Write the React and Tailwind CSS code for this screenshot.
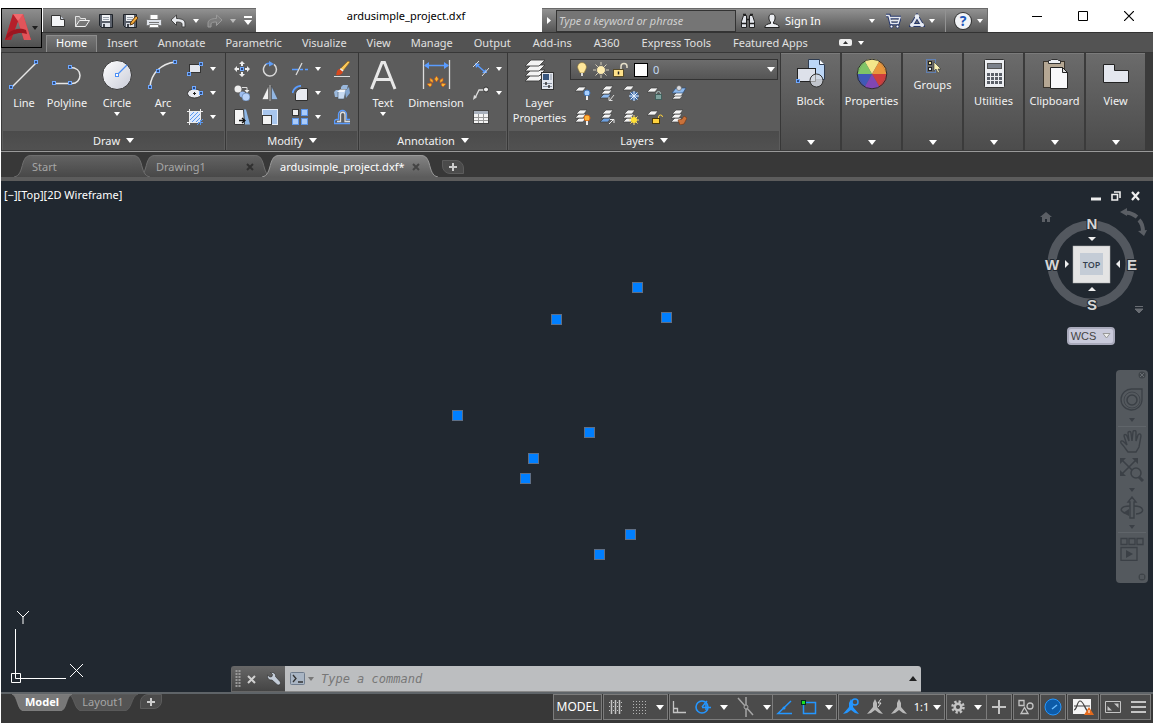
import React from 'react';

const menuTabs = [
  'Home', 'Insert', 'Annotate', 'Parametric', 'Visualize', 'View', 'Manage',
  'Output', 'Add-ins', 'A360', 'Express Tools', 'Featured Apps',
];

const points = [
  [636, 106], [555, 138], [665, 136], [456, 234], [588, 251],
  [532, 277], [524, 297], [629, 353], [598, 373],
];

const Svg = ({ w = 16, h = 16, box, children, className = '' }) => (
  <svg width={w} height={h} viewBox={box || `0 0 ${w} ${h}`} fill="none" className={`shrink-0 ${className}`} aria-hidden="true">
    {children}
  </svg>
);

const Caret = ({ big, className = 'text-white' }) => (
  <Svg w={big ? 8 : 6} h={big ? 5 : 4} className={className}>
    <path d={big ? 'M0 0h8L4 5z' : 'M0 0h6L3 4z'} fill="currentColor" />
  </Svg>
);

// small blue square used as a grip on most drawing icons
const Grip = ({ x, y }) => (
  <rect x={x - 1.5} y={y - 1.5} width="3" height="3" fill="#2d4a80" stroke="#6ea8ff" />
);

/* ---------- quick access icons ---------- */

const NewIcon = () => (
  <Svg><path d="M1.5 2.5h9l4 4v7h-13z" fill="#f4f5f7" stroke="#333" /><path d="M10.5 2.5v4h4" fill="#cdd3de" stroke="#444" /></Svg>
);
const OpenIcon = () => (
  <Svg>
    <path d="M1.5 13.5v-10h4l1 2h5v3" fill="#8b8b8b" stroke="#e4e4e4" />
    <path d="M1.5 13.5l4-6h10l-4 6z" fill="#777" stroke="#f0f0f0" />
  </Svg>
);
const SaveIcon = ({ pen }) => (
  <Svg>
    <path d="M1.5 1.5h13v13h-11l-2-2z" fill="#5a606b" stroke="#1f2329" />
    <rect x="4" y="2" width="8" height="6" fill="#f0f2f5" />
    <path d="M5 4.5h6M5 6.5h6" stroke="#9aa2ad" />
    <rect x="4" y="10" width="8" height="4" fill="#dde1e8" />
    <rect x="5" y="11" width="2" height="3" fill="#42464e" />
    {pen && <path d="M8 12l1-3 5-6 2 2-5 6z" fill="#f3a93b" stroke="#5b3a10" />}
  </Svg>
);
const PrintIcon = () => (
  <Svg>
    <path d="M4 1.5h8v5H4z" fill="#fff" stroke="#888" />
    <rect x="0.5" y="6.5" width="15" height="6" rx="1" fill="#dfe3ea" stroke="#777" />
    <path d="M3 9.5h10" stroke="#777" />
    <path d="M3.5 11.5h9v3h-9z" fill="#fff" stroke="#888" />
  </Svg>
);
const UndoIcon = ({ redo }) => (
  <Svg className={redo ? '-scale-x-100' : ''}>
    <path d="M1 7L6.500 2v3.500c5 0 8.500 1.500 8.500 4.500v4h-3v-3c0-1.500-2-2-5.500-2v3.500z" fill={redo ? '#7c7c7c' : '#e8eaee'} stroke={redo ? '#9a9a9a' : '#454545'} />
  </Svg>
);

/* ---------- draw icons ---------- */

const LineIcon = () => (
  <Svg w={32} h={32}><path d="M4 28L28 4" stroke="#e6e6e6" strokeWidth="1.4" /><Grip x={3} y={28} /><Grip x={28} y={3} /></Svg>
);
const PolylineIcon = () => (
  <Svg w={32} h={32}>
    <path d="M3 24.5h18c4.500 0 8-3.500 8-8s-3.500-8-10-8" stroke="#e6e6e6" strokeWidth="1.5" />
    <Grip x={3} y={24} /><Grip x={19} y={24} /><Grip x={19} y={8} />
  </Svg>
);
const CircleIcon = () => (
  <Svg w={32} h={32}>
    <defs><linearGradient id="disc" x1="0" y1="0" x2="1" y2="1"><stop stopColor="#fff" /><stop offset="1" stopColor="#c9ccd8" /></linearGradient></defs>
    <circle cx="16" cy="16" r="14.5" fill="url(#disc)" stroke="#383838" />
    <path d="M16 16L26 6" stroke="#4d90f5" strokeWidth="1.3" />
    <rect x="14.5" y="14.5" width="3" height="3" fill="#fff" stroke="#4d90f5" />
  </Svg>
);
const ArcIcon = () => (
  <Svg w={32} h={32}><path d="M3 28C4 14 14 5 28 3" stroke="#e6e6e6" strokeWidth="1.6" /><Grip x={3} y={28} /><Grip x={11} y={12} /><Grip x={28} y={3} /></Svg>
);
const RectIcon = () => (
  <Svg><rect x="2.5" y="3.5" width="11" height="8" fill="#e2e5ec" stroke="#333" /><Grip x={2} y={13} /><Grip x={14} y={3} /></Svg>
);
const EllipseIcon = () => (
  <Svg>
    <ellipse cx="7.5" cy="8.5" rx="7" ry="4.5" fill="#e9ebf0" stroke="#333" />
    <path d="M6 8.500h3M7.500 7v3" stroke="#222" /><Grip x={7} y={3} /><Grip x={14} y={8} />
  </Svg>
);
const HatchIcon = () => (
  <Svg>
    <rect x="3" y="3" width="10" height="10" fill="#dce8fb" />
    <path d="M3 7l4-4M3 11l8-8M5 13l8-8M9 13l4-4" stroke="#5b98ee" />
    <path d="M0 2.5h16M0 13.5h13M2.5 0v16M13.5 0v11" stroke="#ededed" />
    <path d="M10 16l6-6M13.5 11v5M11 13.5h5" stroke="#5b98ee" />
  </Svg>
);

/* ---------- modify icons ---------- */

const MoveIcon = () => (
  <Svg>
    <path d="M8 0l3 3H9v2H7V3H5zM8 16l3-3H9v-2H7v2H5zM0 8l3-3v2h2v2H3v2zM16 8l-3-3v2h-2v2h2v2z" fill="#eee" />
    <rect x="6.5" y="6.5" width="3" height="3" fill="#2d4a80" stroke="#6ea8ff" />
  </Svg>
);
const RotateIcon = () => (
  <Svg><path d="M12 3.400A6.500 6.500 0 1 1 5 2.700" stroke="#d8d8d8" strokeWidth="1.5" /><path d="M4 3.200a6.500 6.500 0 0 1 5-.8" stroke="#4d90f5" strokeWidth="1.5" /><path d="M7 0l5 3-5 2.500z" fill="#5f9df6" /></Svg>
);
const TrimIcon = () => (
  <Svg><path d="M0 8.5h6" stroke="#5a9cff" strokeWidth="1.5" /><path d="M4 14L10 2" stroke="#ddd" strokeWidth="1.3" /><path d="M8 8.5h3M13 8.5h3" stroke="#5a9cff" strokeWidth="1.5" /></Svg>
);
const EraseIcon = () => (
  <Svg>
    <path d="M6 8L14 0l2 1-7 9z" fill="#f9c85a" stroke="#8a5a12" strokeWidth="0.6" />
    <path d="M6 8l3 2" stroke="#eee" strokeWidth="2" />
    <path d="M2 14c1-1 0-5 3.500-6L9 11c-1 3-5 3.500-7 3z" fill="#d8481e" /><path d="M0 15.5h16" stroke="#ddd" />
  </Svg>
);
const CopyIcon = () => (
  <Svg>
    <circle cx="4" cy="4" r="3.5" fill="#eee" /><path d="M8 2.5h5V6" stroke="#ddd" /><path d="M10.500 5h5L13 8z" fill="#eee" />
    <circle cx="8.5" cy="9.5" r="3" fill="#9bbcf0" /><circle cx="12" cy="12" r="4" fill="#b9d2f8" stroke="#5578a8" strokeWidth="0.6" />
  </Svg>
);
const MirrorIcon = () => (
  <Svg><path d="M6.500 1v13.500H0z" fill="#f1f1f1" stroke="#444" strokeWidth="0.5" /><path d="M9.500 1v13.500H16z" fill="#93b7e3" stroke="#444" strokeWidth="0.5" /><path d="M8 0v16" stroke="#ccc" strokeWidth="0.8" /></Svg>
);
const FilletIcon = () => (
  <Svg><path d="M3.500 15.500V10C3.500 6 6 3.500 10 3.500h5.500v12z" fill="#e8ebf1" stroke="#2e2e2e" /><path d="M0.500 8C1.500 4 4.500 1.200 9 0.800" stroke="#5a9cff" strokeWidth="1.8" /></Svg>
);
const ExplodeIcon = () => (
  <Svg>
    <path d="M0 7l2-2h4l-1 7H1zM7 2l2-2h5l-1 4H7z" fill="#9ab8dc" /><path d="M4 7l3-2h5l-2 9H4z" fill="#c6daf2" stroke="#456" strokeWidth="0.6" /><path d="M11 6l4-4 1 6-4 5z" fill="#83a6d0" /><path d="M3 7l3-2.500h6L10 7z" fill="#f2f6fb" />
  </Svg>
);
const StretchIcon = () => (
  <Svg><path d="M9 .5h3l4 15h-7z" fill="#8eb7e6" /><path d="M.5.5h9l1 15H.5z" fill="#f3f3f3" stroke="#3a3a3a" /><path d="M5 11.500h5M8 9l3 2.500L8 14" stroke="#111" strokeWidth="1.3" /></Svg>
);
const ScaleIcon = () => (
  <Svg><rect x="0.5" y="0.5" width="15" height="15" fill="#a8c6ee" stroke="#e8eef8" /><rect x="0.5" y="6.5" width="9" height="9" fill="#f3f3f3" stroke="#3a3a3a" /></Svg>
);
const ArrayIcon = () => (
  <Svg>
    <rect x="0.5" y="0.5" width="6" height="6" fill="#eee" stroke="#333" />
    <rect x="9.5" y="0.5" width="6" height="6" fill="#a9cbfa" stroke="#5c95e8" />
    <rect x="0.5" y="9.5" width="6" height="6" fill="#a9cbfa" stroke="#5c95e8" />
    <rect x="9.5" y="9.5" width="6" height="6" fill="#a9cbfa" stroke="#5c95e8" />
  </Svg>
);
const OffsetIcon = () => (
  <Svg>
    <path d="M16 14.5H.5v-2c0-1.500 1-2 2-2h2V5.500a4 4 0 0 1 8 0v5H16" stroke="#5a9cff" strokeWidth="1.3" />
    <path d="M16 12.500h-5V5.500a2.200 2.200 0 0 0-4.500 0v7H3" stroke="#ddd" strokeWidth="1.3" />
  </Svg>
);

/* ---------- annotation icons ---------- */

const TextIcon = () => (
  <Svg w={32} h={32}><path d="M4.500 30L15 3.500h2.500L28 30M8 20.500h16.500" stroke="#e8e8e8" strokeWidth="3" /></Svg>
);
const DimensionIcon = () => (
  <Svg w={32} h={32}>
    <path d="M3.500 1v29M29.500 1v29" stroke="#ddd" strokeWidth="1.3" />
    <path d="M5 6.5h23" stroke="#5a9cff" strokeWidth="1.5" /><path d="M4 6.500L9 3v7zM29 6.500L24 3v7z" fill="#5a9cff" />
    <g fill="#f6b733" stroke="#c4551c" strokeWidth="0.7">
      <path d="M16.500 17l2 3-2 3-2-3zM10 19l3 2v3l-3-2zM23 19l-3 2v3l3-2zM7 25l4-1 1 2-2 2zM26 25l-4-1-1 2 2 2z" />
    </g>
  </Svg>
);
const LinearDimIcon = () => (
  <Svg><path d="M4 4l8 7" stroke="#5a9cff" strokeWidth="1.5" /><path d="M2 2l1 5 4-4zM14 12l-5 0 4-4z" fill="#5a9cff" /><path d="M0 6l6-6M9 15l7-8" stroke="#ddd" /></Svg>
);
const LeaderIcon = () => (
  <Svg><path d="M2 13L6 5h6" stroke="#ddd" strokeWidth="1.3" /><path d="M0 15l1-5 3 2z" fill="#ddd" /><circle cx="13" cy="4.5" r="2.5" fill="#eee" stroke="#333" /></Svg>
);
const TableIcon = () => (
  <Svg><rect x="0.5" y="1.5" width="15" height="13" fill="#f4f4f4" stroke="#444" /><rect x="1" y="2" width="14" height="3" fill="#a9b1bd" /><path d="M1 8.5h14M1 11.5h14M5.5 5v9M10.5 5v9" stroke="#999" /></Svg>
);

/* ---------- layer icons ---------- */

const Sheet = ({ x = 0, y, fill = '#f4f4f4' }) => (
  <path d={`M${x} ${y + 4}l4-4h7l-3 4z`} fill={fill} stroke="#3d3d3d" strokeWidth="0.7" />
);
const LayerPropsIcon = () => (
  <Svg w={32} h={32}>
    {[16, 11, 6, 1].map((y) => (
      <path key={y} d={`M1 ${y + 6}l6-6h14l-6 6z`} fill="#f4f4f4" stroke="#3d3d3d" strokeWidth="0.9" />
    ))}
    <rect x="17.5" y="13.5" width="12" height="17" fill="#e4e7ee" stroke="#333" />
    <rect x="19" y="15" width="6" height="6" fill="#39577f" /><path d="M19 24.5h9M19 27.5h9M27 15v6" stroke="#8a94a3" /><path d="M22 23v3M25 26v3" stroke="#333" strokeWidth="1.5" />
  </Svg>
);
const BulbIcon = () => (
  <Svg><path d="M8 .5a4.500 4.500 0 0 0-4 6.500l2 4h4l2-4A4.500 4.500 0 0 0 8 .5z" fill="#ffe79a" stroke="#8b7434" strokeWidth="0.6" /><path d="M6.500 11v3.500h3V11" fill="#d8d8d8" stroke="#555" /></Svg>
);
const SunIcon = () => (
  <Svg><path d="M8 0v16M0 8h16M2.500 2.500l11 11M13.500 2.500l-11 11" stroke="#d7d0bb" /><circle cx="8" cy="8" r="4.5" fill="#ffedb0" stroke="#666" /></Svg>
);
const UnlockIcon = () => (
  <Svg>
    <path d="M9 8V4.500a3 3 0 0 1 6 0V6" stroke="#e6dfc9" strokeWidth="1.5" /><rect x="1.5" y="7.5" width="10" height="7" fill="#ffe28a" stroke="#564a28" /><path d="M6.500 9.500v3" stroke="#222" strokeWidth="1.5" />
  </Svg>
);

const layerIcons = [
  <Svg key="off"><Sheet y={2} /><circle cx="12" cy="8" r="3" fill="#a8d0ff" stroke="#3f76bb" /><path d="M12 11v4" stroke="#eee" strokeWidth="2" /></Svg>,
  <Svg key="iso"><Sheet x={1} y={9} fill="#8db9ee" /><Sheet x={2} y={5} /><Sheet x={3} y={1} /><path d="M15 10l-4 5M10 12v3.500h3.500" stroke="#ddd" /></Svg>,
  <Svg key="freeze"><Sheet y={1} /><circle cx="11" cy="11" r="4.5" fill="#406ca8" /><path d="M11 6v10M6 11h10M7.500 7.500l7 7M14.500 7.500l-7 7" stroke="#e5f1ff" /></Svg>,
  <Svg key="lock"><Sheet y={3} /><path d="M9.500 10V8.500a2 2 0 0 1 4 0V10" stroke="#a8c0bd" /><rect x="8.5" y="9.5" width="6" height="5" fill="#7fa19d" stroke="#42605c" /></Svg>,
  <Svg key="match"><Sheet x={1} y={10} /><Sheet x={2} y={7} /><path d="M1 8l4-5h10l-3 5z" fill="#8db9ee" stroke="#2c4a73" strokeWidth="0.7" /><circle cx="8" cy="3" r="2.5" fill="#d9dbe0" stroke="#555" strokeWidth="0.6" /></Svg>,
  <Svg key="on"><Sheet y={9} /><Sheet y={5} /><Sheet x={1} y={1} /><circle cx="12" cy="9" r="3" fill="#ffb53a" stroke="#d9690f" /><path d="M12 12v4" stroke="#eee" strokeWidth="2" /></Svg>,
  <Svg key="uniso"><Sheet x={1} y={9} fill="#6da0e0" /><Sheet x={2} y={5} /><Sheet x={3} y={1} /><path d="M10 15l4-4M11 10.500h4V14" stroke="#eee" /></Svg>,
  <Svg key="thaw"><Sheet y={9} /><Sheet y={5} /><Sheet x={1} y={1} /><path d="M11 6v10M6 11h10M7.500 7.500l7 7M14.500 7.500l-7 7" stroke="#ffe07a" /><circle cx="11" cy="11" r="3" fill="#ffe033" /></Svg>,
  <Svg key="unlock"><Sheet y={2} /><path d="M11.500 10V8a2 2 0 0 1 4 0" stroke="#ffd23c" /><rect x="5.5" y="9.5" width="7" height="5" fill="#ffd23c" stroke="#4b3a09" /></Svg>,
  <Svg key="current"><Sheet y={9} /><Sheet y={5} /><Sheet x={1} y={1} /><path d="M7 11l4-1 2-3 3 2-3 6-4 1z" fill="#c9713a" stroke="#6b3514" strokeWidth="0.6" /></Svg>,
];

/* ---------- collapsed panel icons ---------- */

const BlockIcon = () => (
  <Svg w={32} h={32}>
    <path d="M13.500 1.500h11l5 5v15h-16z" fill="#bcd6f6" stroke="#2f3c50" /><path d="M24.500 1.500v5h5" fill="#fff" stroke="#2f3c50" />
    <rect x="2.5" y="10.5" width="18" height="13" fill="#dde1ea" stroke="#222" /><circle cx="21.5" cy="22.5" r="6.5" fill="#d4d8e0" fillOpacity=".85" stroke="#333" /><path d="M20.500 17v6.500H16" stroke="#999" /><Grip x={3} y={23} />
  </Svg>
);
const WheelIcon = () => (
  <Svg w={32} h={32}>
    <path d="M16 16L8.500 3h15z" fill="#f3e78a" /><path d="M16 16l7.500-13L31 16z" fill="#e8963c" /><path d="M16 16h15l-7.500 13z" fill="#cf3d3d" />
    <path d="M16 16l7.500 13h-15z" fill="#8146b4" /><path d="M16 16L8.500 29 1 16z" fill="#4059b8" /><path d="M16 16H1L8.500 3z" fill="#7fc566" />
    <path d="M8.500 3a15 15 0 0 1 15 0z" fill="#f3e78a" /><path d="M23.500 3A15 15 0 0 1 31 16z" fill="#e8963c" /><path d="M31 16a15 15 0 0 1-7.500 13z" fill="#cf3d3d" />
    <path d="M23.500 29a15 15 0 0 1-15 0z" fill="#8146b4" /><path d="M8.500 29A15 15 0 0 1 1 16z" fill="#4059b8" /><path d="M1 16A15 15 0 0 1 8.500 3z" fill="#7fc566" />
    <circle cx="16" cy="16" r="14.8" stroke="#2e2e2e" />
  </Svg>
);
const GroupIcon = () => (
  <Svg>
    <path d="M1.500 1.500h9v13h-9z" stroke="#5c9bff" strokeDasharray="1 1" /><rect x="3.5" y="3.5" width="3" height="3" fill="#f5e79a" stroke="#222" /><rect x="3.5" y="9.5" width="3" height="3" fill="#dfeaf5" stroke="#222" />
    <path d="M9 4v9l2-2 2 4 1.500-1-1.500-3h3z" fill="#f7efb6" stroke="#333" strokeWidth="0.6" />
  </Svg>
);
const CalculatorIcon = () => (
  <Svg w={32} h={32}>
    <rect x="6.5" y="1.5" width="20" height="28" rx="1" fill="#eceef2" stroke="#333" /><rect x="9.5" y="5.5" width="14" height="5" fill="#7c828c" stroke="#555" />
    <path d="M9 16.5h15M9 20.5h15M9 24.5h15" stroke="#5a5f68" strokeWidth="3" strokeDasharray="3 1" />
  </Svg>
);
const ClipboardIcon = () => (
  <Svg w={32} h={32}>
    <rect x="4.5" y="3.5" width="21" height="26" fill="#b5a793" stroke="#3a342b" /><path d="M9.500 2.500h2l1-1h6l1 1h2v3h-12z" fill="#eef0f4" stroke="#333" />
    <path d="M11.500 9.500h12l5 5v16h-17z" fill="#f8f8fa" stroke="#222" /><path d="M23.500 9.500v5h5z" fill="#ddd" stroke="#222" />
  </Svg>
);
const ViewIcon = () => (
  <Svg w={32} h={32}><path d="M3.500 6.500h11v6h14v12h-25z" fill="#e4e7ee" stroke="#222" /></Svg>
);

const collapsedPanels = [
  ['Block', BlockIcon], ['Properties', WheelIcon], ['Groups', GroupIcon],
  ['Utilities', CalculatorIcon], ['Clipboard', ClipboardIcon], ['View', ViewIcon],
];

/* ---------- ribbon building blocks ---------- */

const Panel = ({ title, className = '', children }) => (
  <section className={`flex flex-col border-r border-[#373737] ${className}`}>
    <div className="flex flex-1 pt-1">{children}</div>
    <button className="mx-px flex h-[19px] items-center justify-center gap-[6px] bg-linear-to-b from-[#4b4b4b] to-[#515151]">
      {title}<Caret big />
    </button>
  </section>
);

const BigButton = ({ icon: Icon, label, caret, className = '' }) => (
  <button className={`flex flex-col items-center ${className}`}>
    <span className="mt-[2px] mb-1"><Icon /></span>
    {label}
    {caret && <span className="mt-px"><Caret /></span>}
  </button>
);

const SmallButton = ({ label, icon: Icon, caret }) => (
  <button aria-label={label} className="flex h-6 items-center justify-center gap-[7px]">
    <Icon />{caret && <Caret />}
  </button>
);

const Header = () => (
  <header className="flex h-[52px]">
    <div className="flex w-[41px] shrink-0 flex-col bg-[#535353]">
      <div className="h-2 bg-white" />
      <button aria-label="Application menu" className="flex h-10 items-center justify-between border border-black bg-linear-to-b from-[#8e8e8e] to-[#505050] px-[3px]">
        <Svg w={26} h={30}>
          <path d="M8 1h10l8 26h-7L13 8 6 27H0z" fill="#d3343c" /><path d="M8 1l5 7-7 19H0z" fill="#b51f2a" />
          <path d="M13 8l3-7h2l8 26h-7z" fill="#e2545a" /><path d="M2 21c7-6 14-6 19-4l1 4c-7-2-14-1-22 6z" fill="#9c1620" /><path d="M8 1h10l-5 7z" fill="#ef6a6e" />
        </Svg>
        <Caret className="text-[#1f1f1f]" />
      </button>
    </div>
    <div className="flex min-w-0 flex-1 flex-col">
      <div className="flex h-8 bg-white">
        <div className="mt-2 ml-px flex w-[213px] items-center gap-2 border-t border-[#6a6a6a] bg-linear-to-b from-[#929292] to-[#555] pl-[7px]">
          <button aria-label="New"><NewIcon /></button>
          <button aria-label="Open"><OpenIcon /></button>
          <button aria-label="Save"><SaveIcon /></button>
          <button aria-label="Save as"><SaveIcon pen /></button>
          <button aria-label="Plot"><PrintIcon /></button>
          <button aria-label="Undo" className="flex items-center gap-[7px]"><UndoIcon /><Caret /></button>
          <button aria-label="Redo" className="flex items-center gap-[7px]"><UndoIcon redo /><Caret className="text-[#bbb]" /></button>
          <button aria-label="Customize"><Svg w={8} h={9}><path d="M0 0h8v2H0zM0 4h8L4 9z" fill="#fff" /></Svg></button>
        </div>
        <h1 className="flex flex-1 items-center justify-center pl-[14px] text-black">ardusimple_project.dxf</h1>
        <div className="mt-2 flex w-[446px] items-center border-t border-r border-[#6a6a6a] bg-linear-to-b from-[#929292] to-[#555] text-white">
          <button aria-label="Collapse search" className="flex w-[14px] justify-center"><Svg w={4} h={7}><path d="M0 0l4 3.500L0 7z" fill="#fff" /></Svg></button>
          <input aria-label="Search" placeholder="Type a keyword or phrase" className="h-[22px] w-[180px] border border-[#333] bg-[#757575] px-[2px] italic placeholder:text-[#d0d0d0]" />
          <button aria-label="Find" className="ml-[4px]">
            <Svg><path d="M1.500 14.500v-6l2-6h3v12zM9.500 14.500v-12h3l2 6v6z" fill="#e3e6ec" stroke="#222" /><path d="M6 6.500h4M3 1.500h3M10 1.500h3M2 10.500h4M10 10.500h4" stroke="#222" strokeWidth="1.5" /></Svg>
          </button>
          <button className="ml-2 flex items-center gap-[5px]">
            <Svg><path d="M8 1C5.500 1 4.500 3 5 6c.3 1.700 1 2.500 1.500 3v1.500C3 11 1 12 .8 14.500h14.400C15 12 13 11 9.500 10.500V9c.5-.5 1.200-1.300 1.500-3 .5-3-.5-5-3-5z" fill="#eceef2" stroke="#222" /></Svg>
            Sign In
          </button>
          <button aria-label="Account menu" className="ml-auto"><Caret /></button>
          <button aria-label="Store" className="ml-[10px]">
            <Svg><path d="M1 2.500h3l2 8h7l2-6H5" stroke="#26376b" strokeWidth="3.5" /><path d="M1 2.500h3l2 8h7l2-6H5M6 7.500h8" stroke="#e6e9f0" strokeWidth="1.5" /><circle cx="6.5" cy="13.5" r="1.5" fill="#fff" stroke="#26376b" /><circle cx="12.5" cy="13.5" r="1.5" fill="#fff" stroke="#26376b" /></Svg>
          </button>
          <button aria-label="A360" className="ml-2 flex items-center gap-1">
            <Svg><path d="M8 3.500L3 12h10z" stroke="#26376b" strokeWidth="4" /><path d="M8 3.500L3 12h10z" stroke="#dfe4ee" strokeWidth="2.2" /><circle cx="8" cy="3.5" r="2.3" fill="#e9edf5" /><circle cx="3" cy="12" r="2" fill="#e9edf5" /><circle cx="13" cy="12" r="2" fill="#e9edf5" /></Svg>
            <Caret />
          </button>
          <span className="ml-[10px] h-full w-px bg-[#929292]" />
          <button aria-label="Help" className="mr-1 ml-[9px] flex items-center gap-[6px]">
            <span className="flex size-4 items-center justify-center rounded-full bg-[#f1f3f6] text-[14px] leading-4 font-bold text-[#1f56b8] ring-1 ring-[#333]">?</span>
            <Caret />
          </button>
        </div>
        <div className="flex w-[165px] items-center text-black">
          <button aria-label="Minimize" className="ml-[26px] flex w-[46px] justify-center"><Svg w={10} h={10}><path d="M0 5.5h10" stroke="#000" /></Svg></button>
          <button aria-label="Maximize" className="flex w-[46px] justify-center"><Svg w={10} h={10}><path d="M.5.5h9v9h-9z" stroke="#000" /></Svg></button>
          <button aria-label="Close" className="flex w-[46px] justify-center"><Svg w={10} h={10}><path d="M0 0l10 10M10 0L0 10" stroke="#000" strokeWidth="1.2" /></Svg></button>
        </div>
      </div>
      <nav className="flex h-5 items-end border-t border-[#333] bg-[#535353] pl-1 text-[#e0e0e0]">
        {menuTabs.map((tab, i) => {
          if (i === 0) {
            return <button key={tab} className="h-[17px] border border-b-0 border-[#8c8c8c] bg-linear-to-b from-[#777] to-[#5c5c5c] px-[9px] pb-[2px] leading-[14px] text-white">{tab}</button>;
          }
          return <button key={tab} className={`h-[17px] pb-[2px] leading-[14px] ${i > 6 ? 'px-[11px]' : 'px-[10px]'}`}>{tab}</button>;
        })}
        <button aria-label="Minimize ribbon" className="ml-[20px] flex h-[17px] items-center gap-[6px] pb-[2px]">
          <Svg w={13} h={7}><rect width="13" height="7" rx="2" fill="#eee" /><path d="M4 5h5L6.500 2z" fill="#333" /></Svg>
          <Caret />
        </button>
      </nav>
    </div>
  </header>
);

const Ribbon = () => (
  <div className="flex h-[99px] border-t border-[#383838] bg-[#3b3b3b] pl-px text-[#f2f2f2]">
    <div className="flex h-[97px] bg-[#5c5c5c]">
      <Panel title="Draw" className="w-[224px]">
        <BigButton icon={LineIcon} label="Line" className="w-[44px]" />
        <BigButton icon={PolylineIcon} label="Polyline" className="w-[42px]" />
        <BigButton icon={CircleIcon} label="Circle" caret className="w-[58px]" />
        <BigButton icon={ArcIcon} label="Arc" caret className="w-[34px]" />
        <div className="ml-[7px] flex flex-col">
          <SmallButton label="Rectangle" icon={RectIcon} caret />
          <SmallButton label="Ellipse" icon={EllipseIcon} caret />
          <SmallButton label="Hatch" icon={HatchIcon} caret />
        </div>
      </Panel>
      <Panel title="Modify" className="w-[133px]">
        <div className="ml-[2px] grid grid-cols-[28px_28px_44px_28px] content-start">
          <SmallButton label="Move" icon={MoveIcon} />
          <SmallButton label="Rotate" icon={RotateIcon} />
          <SmallButton label="Trim" icon={TrimIcon} caret />
          <SmallButton label="Erase" icon={EraseIcon} />
          <SmallButton label="Copy" icon={CopyIcon} />
          <SmallButton label="Mirror" icon={MirrorIcon} />
          <SmallButton label="Fillet" icon={FilletIcon} caret />
          <SmallButton label="Explode" icon={ExplodeIcon} />
          <SmallButton label="Stretch" icon={StretchIcon} />
          <SmallButton label="Scale" icon={ScaleIcon} />
          <SmallButton label="Array" icon={ArrayIcon} caret />
          <SmallButton label="Offset" icon={OffsetIcon} />
        </div>
      </Panel>
      <Panel title="Annotation" className="w-[149px]">
        <BigButton icon={TextIcon} label="Text" caret className="w-12" />
        <BigButton icon={DimensionIcon} label="Dimension" className="w-[58px]" />
        <div className="ml-2 flex flex-col items-start">
          <SmallButton label="Linear" icon={LinearDimIcon} caret />
          <SmallButton label="Leader" icon={LeaderIcon} caret />
          <SmallButton label="Table" icon={TableIcon} />
        </div>
      </Panel>
      <Panel title="Layers" className="w-[273px]">
        <BigButton icon={LayerPropsIcon} label={<>Layer<br />Properties</>} className="ml-px w-[61px] leading-[15px]" />
        <div className="flex flex-col">
          <button aria-label="Layer" className="mt-[2px] mb-px flex h-[21px] w-[208px] items-center gap-[3px] border border-[#333] bg-linear-to-b from-[#6d6d6d] to-[#555] pr-[2px] pl-[3px]">
            <BulbIcon /><SunIcon /><UnlockIcon />
            <span className="ml-[3px] size-[14px] border border-black bg-white" />
            <span className="ml-[2px] flex-1 text-left text-[#c4dcf5]">0</span>
            <Caret big />
          </button>
          <div className="grid grid-cols-[24px_24px_24px_24px_24px] pl-px">
            {layerIcons.map((icon) => (
              <button key={icon.key} aria-label={`Layer ${icon.key}`} className="flex h-6 items-center justify-center">{icon}</button>
            ))}
          </div>
        </div>
      </Panel>
    </div>
    <div className="flex h-[97px] gap-[2px]">
      {collapsedPanels.map(([label, Icon]) => (
        <button key={label} className="flex w-[59px] flex-col items-center border-t border-[#7b7b7b] bg-linear-to-b from-[#6b6b6b] to-[#4c4c4c] pt-1">
          <span className="mb-[3px]"><Icon /></span>
          {label}
          <span className="mt-auto mb-[5px]"><Caret big /></span>
        </button>
      ))}
    </div>
  </div>
);

/* ---------- document tabs ---------- */

const TabEdge = ({ active, right }) => (
  <Svg w={18} h={22} className={right ? '-scale-x-100' : ''}>
    <defs>
      <linearGradient id="tabOn" x1="0" y1="0" x2="0" y2="22" gradientUnits="userSpaceOnUse"><stop stopColor="#858585" /><stop offset="1" stopColor="#5c5c5c" /></linearGradient>
      <linearGradient id="tabOff" x1="0" y1="0" x2="0" y2="22" gradientUnits="userSpaceOnUse"><stop stopColor="#626262" /><stop offset="1" stopColor="#484848" /></linearGradient>
    </defs>
    <path d="M0 22C6 21 7 15 9 8C11 2 13 0 18 0V22z" fill={active ? 'url(#tabOn)' : 'url(#tabOff)'} />
    <path d="M0 22C6 21 7 15 9 8C11 2 13 0.500 18 0.500" stroke={active ? '#9a9a9a' : '#6e6e6e'} />
  </Svg>
);

const DocTab = ({ label, active, close, className = '' }) => (
  <div className={`flex h-[22px] ${active ? 'z-10 text-white' : 'text-[#a6a6a6]'} ${className}`}>
    <TabEdge active={active} />
    <div className={`flex flex-1 items-center justify-between border-t ${active ? 'border-[#9a9a9a] bg-linear-to-b from-[#858585] to-[#5c5c5c]' : 'border-[#6e6e6e] bg-linear-to-b from-[#626262] to-[#484848]'}`}>
      <button className="whitespace-nowrap">{label}</button>
      {close && <button aria-label={`Close ${label}`}><Svg w={8} h={8}><path d="M1 1l6 6M7 1L1 7" stroke={active ? '#444' : '#303030'} strokeWidth="2" /></Svg></button>}
    </div>
    <TabEdge active={active} right />
  </div>
);

const PlusIcon = () => <Svg w={8} h={8}><path d="M4 0v8M0 4h8" stroke="#ccc" strokeWidth="2" /></Svg>;

const DocTabs = () => (
  <div className="flex h-[30px] items-end border-t border-b-4 border-t-[#999] border-b-[#5c5c5c] bg-[#383838] pl-[13px]">
    <DocTab label="Start" className="w-[136px]" />
    <DocTab label="Drawing1" close className="-ml-3 w-[134px]" />
    <DocTab label="ardusimple_project.dxf*" active close className="-ml-[10px] w-[176px]" />
    <button aria-label="New drawing" className="mb-[3px] ml-1 flex h-[14px] w-[22px] items-center justify-center rounded-tr-lg rounded-bl-lg border border-[#5c5c5c] bg-[#4b4b4b]"><PlusIcon /></button>
  </div>
);

/* ---------- drawing area ---------- */

const ViewCube = () => (
  <Svg w={112} h={110} className="font-['Liberation_Sans',sans-serif]">
    <circle cx="51" cy="56" r="39" stroke="#53585f" strokeWidth="9" />
    <path d="M0 9l6-5 6 5h-2v5H7v-3H5v3H2V9z" fill="#5b5f65" />
    <path d="M85 5c4-1 8 1 12 4" stroke="#5b5f65" strokeWidth="4" /><path d="M80 4l7-4v8z" fill="#5b5f65" />
    <path d="M99 12c3 3 4 8 4 12" stroke="#5b5f65" strokeWidth="4" /><path d="M98 23l9-1-3 6z" fill="#5b5f65" />
    <rect x="33" y="38" width="37" height="37" fill="#e4e4e4" stroke="#aaa" strokeWidth="0.5" /><rect x="40" y="45" width="23" height="22" fill="#c4ccd6" />
    <text x="51.5" y="60" fontSize="9" fontWeight="600" fill="#33404e" textAnchor="middle" className="font-['Open_Sans',sans-serif]">TOP</text>
    <g fontSize="15" fontWeight="700" fill="#d6d6d6" stroke="#212830" strokeWidth="2" paintOrder="stroke" textAnchor="middle">
      <text x="52" y="21">N</text><text x="12" y="62">W</text><text x="92" y="62">E</text><text x="52" y="102">S</text>
    </g>
    <path d="M48 29h8l-4 4zM48 83h8l-4-4zM25 52v8l4-4zM80 52v8l-4-4z" fill="#eee" />
    <path d="M95 98.5h8M95 101h8l-4 4z" fill="#686c72" stroke="#686c72" />
  </Svg>
);

const NavBar = () => (
  <div className="absolute top-[189px] right-[5px] flex h-[213px] w-[32px] flex-col items-center rounded-[4px] bg-[#54595e] text-[#3b4046]">
    <button aria-label="Close navigation bar" className="mt-px mr-[2px] self-end"><Svg w={8} h={8}><circle cx="4" cy="4" r="3.5" fill="#3f4449" /><path d="M2 2l4 4M6 2L2 6" stroke="#666b70" /></Svg></button>
    <button aria-label="Steering wheel" className="mt-[9px] flex flex-col items-center gap-[6px]">
      <Svg w={24} h={24}><path d="M12 1h10v11A10.500 10.500 0 1 1 12 1z" stroke="currentColor" strokeWidth="1.3" /><circle cx="12" cy="12" r="8" stroke="currentColor" strokeWidth="0.8" /><circle cx="12" cy="12" r="5" stroke="currentColor" strokeWidth="1.5" /></Svg>
      <Caret className="" />
    </button>
    <span className="mt-1 h-px w-7 bg-[#60656a]" />
    <button aria-label="Pan" className="mt-[3px]">
      <Svg w={24} h={24}><path d="M8 22C5 18 3 15 1 13c-1-2 1-3 3-1l3 3-3-9c0-2 2-2 3 0l2 5-1-8c0-2 3-2 3 0l1 8 1-9c0-2 3-2 3 0v9l2-6c1-2 3-1 3 1l-2 11-3 5z" stroke="currentColor" strokeWidth="1.4" /></Svg>
    </button>
    <button aria-label="Zoom" className="mt-1 flex flex-col items-center gap-[6px]">
      <Svg w={24} h={24}><path d="M2 2l15 15M17 1L1 17" stroke="currentColor" strokeWidth="1.6" /><path d="M0 0h6L0 6zM18 0h-6l6 6zM0 18v-6l6 6z" fill="currentColor" /><circle cx="16" cy="15" r="5" fill="#54595e" stroke="currentColor" strokeWidth="1.5" /><path d="M19 19l4 4" stroke="currentColor" strokeWidth="3" /></Svg>
      <Caret className="" />
    </button>
    <button aria-label="Orbit" className="mt-1 flex flex-col items-center gap-[6px]">
      <Svg w={24} h={23}><path d="M10 22V6H8l4-5 4 5h-2v16z" stroke="currentColor" strokeWidth="1.4" /><path d="M16 18c10-1 8-8-2-8M10 10C0 10-1 15 5 17" stroke="currentColor" strokeWidth="1.5" /><path d="M3 17l6-4v7z" fill="currentColor" /></Svg>
      <Caret className="" />
    </button>
    <span className="mt-[3px] h-px w-7 bg-[#60656a]" />
    <button aria-label="Show motion" className="mt-1">
      <Svg w={24} h={24}><path d="M1 1.500h6v6H1zM9 1.500h6v6H9zM17 1.500h6v6h-6zM1 10.500h16v13H1z" stroke="currentColor" strokeWidth="1.3" /><path d="M6 13l7 4-7 4z" fill="currentColor" /></Svg>
    </button>
    <button aria-label="Navigation bar options" className="mt-auto mr-[2px] mb-[2px] self-end"><Svg w={8} h={8}><circle cx="4" cy="4" r="3.5" fill="#3f4449" /><path d="M2 3h4M2 5h4" stroke="#666b70" /></Svg></button>
  </div>
);

const CommandLine = () => (
  <form className="absolute right-[2px] bottom-0 left-0 mx-auto flex h-[26px] w-[690px]">
    <div className="flex w-[54px] items-center rounded-tl-[3px] border border-r-0 border-[#666] bg-linear-to-b from-[#666] to-[#444] pl-[3px]">
      <Svg w={6} h={18}><path d="M1.500 0v18M4.500 0v18" stroke="#999" strokeWidth="2" strokeDasharray="2 1" /></Svg>
      <button type="button" aria-label="Close command line" className="ml-[6px]"><Svg w={9} h={9}><path d="M1 1l7 7M8 1L1 8" stroke="#d0d0d0" strokeWidth="2" /></Svg></button>
      <button type="button" aria-label="Customize command line" className="ml-[11px]">
        <Svg w={14} h={14}><path d="M.5 3l2.500 2 2-.5.5-2L3.500.500C7 0 9 2 8.500 4.500l4.500 5c1.500 2.500-1 4.500-3 3L5 8C2 8.500 0 6.500.5 3z" fill="#c3ccd8" stroke="#333" strokeWidth="0.7" /></Svg>
      </button>
    </div>
    <label className="flex flex-1 items-center rounded-tr-[3px] border-b border-[#888] bg-[#bcbec0] pl-[5px]">
      <Svg w={15} h={13}><rect x="0.5" y="0.5" width="14" height="12" rx="1" fill="#a9b5c4" stroke="#6f7c8d" /><path d="M3 3l3 3.500L3 10M8 10h5" stroke="#333" strokeWidth="1.3" /></Svg>
      <Caret className="ml-[3px] text-[#777]" />
      <input aria-label="Command" placeholder="Type a command" className="ml-[7px] flex-1 font-['DejaVu_Sans_Mono',monospace] text-[12px] italic outline-none placeholder:text-[#777]" />
      <Svg w={8} h={5} className="mr-1"><path d="M0 5h8L4 0z" fill="#222" /></Svg>
    </label>
  </form>
);

const Canvas = () => (
  <main className="relative flex-1 overflow-hidden bg-[#212830] text-white">
    <p className="pt-[6px] pl-[3px]">[−][Top][2D Wireframe]</p>
    {points.map(([x, y]) => (
      <span key={`${x}-${y}`} className="absolute -mt-[5px] -ml-[5px] size-[11px] border border-[#5f6f86] bg-[#007fff]" style={{ left: x, top: y }} />
    ))}
    <div className="absolute top-[10px] right-[13px] flex items-center gap-[10px]">
      <button aria-label="Minimize drawing"><Svg w={10} h={10}><path d="M0 8h10" stroke="#eee" strokeWidth="3" /></Svg></button>
      <button aria-label="Restore drawing"><Svg w={10} h={10}><path d="M3 1h6v6M1 3.500h5.500V9H1z" stroke="#eee" strokeWidth="1.6" /></Svg></button>
      <button aria-label="Close drawing"><Svg w={9} h={10}><path d="M1 1l7 8M8 1L1 9" stroke="#eee" strokeWidth="2.2" /></Svg></button>
    </div>
    <div className="absolute top-[27px] right-px"><ViewCube /></div>
    <button className="absolute top-[146px] right-[38px] flex h-[18px] w-[48px] items-center justify-center gap-[6px] rounded-[4px] border-2 border-[#a9aabb] bg-[#c9cadb] font-['Liberation_Sans',sans-serif] text-[#444]">
      WCS<Svg w={9} h={6}><path d="M1 .5h7L4.500 5z" fill="#eee" stroke="#999" /></Svg>
    </button>
    <NavBar />
    <Svg w={74} h={76} className="absolute bottom-[5px] left-[10px]">
      <path d="M4.500 18v49.500M4.500 67.500H55M.5 62.500h9v9h-9zM59 53l13 13M72 53L59 66M6 0l6 6 6-6M12 6v7" stroke="#fff" />
    </Svg>
    <CommandLine />
  </main>
);

/* ---------- layout tabs and status bar ---------- */

const LayoutTab = ({ label, active, className = '' }) => (
  <button className={`relative flex h-[17px] items-center justify-center pb-[2px] ${active ? 'z-10 font-bold text-white' : 'text-[#a6a6a6]'} ${className}`}>
    <svg viewBox="0 0 60 17" preserveAspectRatio="none" className="absolute inset-0 size-full" aria-hidden="true">
      <path d="M0 0C6 2 5 17 12 17H48C55 17 54 2 60 0z" fill={active ? '#787878' : '#545454'} stroke={active ? '#858585' : '#626262'} strokeWidth="0.7" />
    </svg>
    <span className="relative">{label}</span>
  </button>
);

const Cell = ({ label, className = '', children }) => (
  <button aria-label={label} className={`flex h-[26px] items-center justify-center border border-[#7c7c7c] bg-[#4b4b4b] ${className}`}>{children}</button>
);

const Person = ({ color, children }) => (
  <Svg w={18} h={18}><path d="M9 1l2 4v4l6 7-4-1-4-3-4 3-4 1 6-7V5z" fill={color} />{children}</Svg>
);

const StatusBar = () => (
  <footer className="flex h-[31px] items-start justify-between border-t-2 border-[#5f6468] bg-[#383838] pr-[2px] pl-[11px] text-[#bdbdbd]">
    <div className="flex items-start">
      <LayoutTab label="Model" active className="w-[60px]" />
      <LayoutTab label="Layout1" className="-ml-1 w-[70px]" />
      <button aria-label="New layout" className="ml-[2px] flex h-[15px] w-[22px] items-center justify-center rounded-tl-lg rounded-br-lg border border-[#5c5c5c] bg-[#4b4b4b]"><PlusIcon /></button>
    </div>
    <div className="flex gap-px text-white">
      <Cell className="w-[49px]"><span className="text-[12px]">MODEL</span></Cell>
      <Cell label="Grid and snap" className="w-[65px] gap-2">
        <Svg><path d="M3.500 1v14M7.500 1v14M11.500 1v14" stroke="#c4c4c4" strokeWidth="1.5" /><path d="M1 3.500h14M1 7.500h14M1 11.500h14" stroke="#c4c4c4" strokeDasharray="1 1" /></Svg>
        <Svg><path d="M1 2.500h14M1 5.500h14M1 8.500h14M1 11.500h14M1 14.500h14" stroke="#b4b4b4" strokeDasharray="1 2" /></Svg>
        <Caret big />
      </Cell>
      <div className="flex">
        <Cell label="Drafting aids" className="w-[104px] gap-[9px]">
          <Svg w={14}><path d="M1.500 2v11.500H14M1.500 9.500h4v4" stroke="#c4c4c4" strokeWidth="1.3" /></Svg>
          <Svg><circle cx="7" cy="8" r="6" stroke="#2496ff" strokeWidth="1.6" /><path d="M7 8.500h9M7 8l5-6M11 5v6" stroke="#2496ff" strokeWidth="1.5" /></Svg>
          <Caret big />
          <Svg w={17} h={20}><path d="M1 1l15 17M9 0v20" stroke="#a5a5a5" strokeWidth="1.5" /><circle cx="9" cy="10" r="2" fill="#4b4b4b" stroke="#aaa" /></Svg>
          <Caret big />
        </Cell>
        <Cell label="Object snap" className="-ml-px w-[65px] gap-[8px]">
          <Svg w={17}><path d="M15 2L2 14.500h14" stroke="#2496ff" strokeWidth="1.5" /><circle cx="8" cy="9" r="1.5" fill="#2496ff" /></Svg>
          <Svg><path d="M2.500 3.500h12v11h-12z" stroke="#2496ff" strokeWidth="1.5" /><rect x="0.5" y="1.5" width="4" height="4" fill="#1ee01e" stroke="#032" /></Svg>
          <Caret big />
        </Cell>
      </div>
      <Cell label="Annotation scale" className="w-[107px] gap-[6px]">
        <Person color="#2496ff"><circle cx="13" cy="4" r="3" fill="#4b4b4b" stroke="#2496ff" strokeWidth="1.5" /></Person>
        <Person color="#b9b9b9"><path d="M15 1l-3 4h3l-3 4" stroke="#ddd" /></Person>
        <Person color="#b9b9b9" />
        <span className="flex items-center gap-1">1:1<Caret big /></span>
      </Cell>
      <div className="flex">
        <Cell label="Workspace" className="w-[41px] gap-[9px]">
          <Svg w={14} h={14}><circle cx="7" cy="7" r="5.5" stroke="#c4c4c4" strokeWidth="2.5" strokeDasharray="2.3 2" /><circle cx="7" cy="7" r="3.3" stroke="#c4c4c4" strokeWidth="2.5" /></Svg>
          <Caret big />
        </Cell>
        <Cell label="Annotation monitor" className="-ml-px w-[26px]"><Svg w={14} h={14}><path d="M7 0v14M0 7h14" stroke="#c4c4c4" strokeWidth="2" /></Svg></Cell>
      </div>
      <Cell label="Isolate objects" className="w-[26px]"><Svg><path d="M1 1.500h5v5H1zM3 14.500h7l-3.500-6z" stroke="#c4c4c4" strokeWidth="1.3" /><circle cx="12" cy="7" r="3" stroke="#c4c4c4" strokeWidth="1.3" /></Svg></Cell>
      <Cell label="Hardware acceleration" className="w-[26px]"><Svg w={18} h={18}><circle cx="9" cy="9" r="8" fill="#0d5ba8" stroke="#2496ff" /><path d="M8 11l5-4" stroke="#6dbdff" strokeWidth="1.5" /></Svg></Cell>
      <Cell label="Performance" className="w-[32px]"><Svg w={22} h={18}><rect x="1" y="1" width="18" height="15" fill="#f4f4f4" /><path d="M2 12C5 12 5 3 8 3c4 0 5 10 9 11M2 8h16" stroke="#222" strokeWidth="1.2" strokeOpacity="0.85" /><path d="M17 9l5 8H12z" fill="#e46a1c" /><path d="M17 12v3" stroke="#fff" /></Svg></Cell>
      <Cell label="Customization" className="w-[51px] gap-[9px]">
        <Svg w={16} h={12}><path d="M.5.5h15v11H.5z" stroke="#c4c4c4" /><path d="M9 2.500h4.500V7zM7 9.500H2.500V5z" fill="#c4c4c4" /></Svg>
        <Svg><path d="M1 3h15M1 8h15M1 13h15" stroke="#c4c4c4" strokeWidth="2" /></Svg>
      </Cell>
    </div>
  </footer>
);

const App = () => (
  <div className="flex h-screen flex-col overflow-hidden border-l border-white bg-[#383838] font-['Noto_Sans',sans-serif] text-[11px] leading-4">
    <Header />
    <Ribbon />
    <DocTabs />
    <Canvas />
    <StatusBar />
  </div>
);

export default App;
